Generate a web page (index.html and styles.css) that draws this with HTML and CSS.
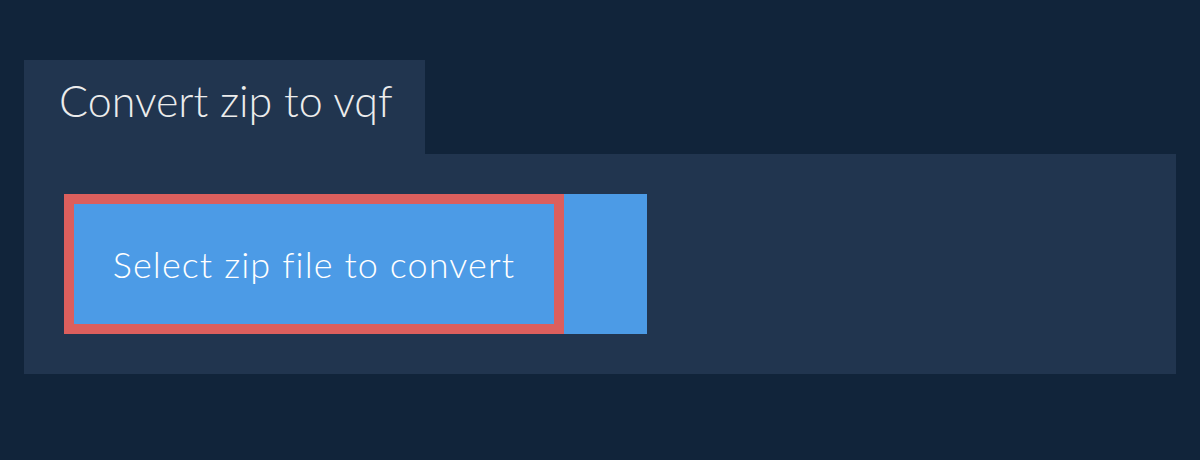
FILE: index.html
```html
<!DOCTYPE html>
<html lang="en">
<head>
    <meta charset="UTF-8">
    <meta name="viewport" content="width=device-width, initial-scale=1.0">
    <title>Convert zip to vqf</title>
    <link rel="stylesheet" href="styles.css">
</head>
<body>
    <div class="wrap">
        <!-- Tab title -->
        <div class="tab">
            <h1>Convert zip to vqf</h1>
        </div>

        <!-- Upload panel -->
        <div class="panel">
            <div class="picker">
                <label class="select">Select zip file to convert</label>
            </div>
        </div>
    </div>
</body>
</html>
```

FILE: styles.css
```css
/* General Styles */
body {
    margin: 0;
    padding: 0;
    background-color: #11243a;
    font-family: Lato, "Open Sans", sans-serif;
    color: #ececec;
}
.wrap {
    padding: 60px 24px 0;
}
.tab {
    display: inline-block;
    width: 401px;
    height: 94px;
    box-sizing: border-box;
    padding: 0 0 0 35px;
    background: #21354f;
}
.tab h1 {
    margin: 0;
    font-size: 43px;
    font-weight: 300;
    line-height: 82px;
}
.panel {
    display: flex;
    height: 220px;
    box-sizing: border-box;
    padding: 40px;
    background: #21354f;
}
.picker {
    display: flex;
    width: 583px;
    height: 140px;
    background: #4c9be6;
}
.select {
    display: flex;
    align-items: center;
    justify-content: center;
    width: 500px;
    height: 140px;
    box-sizing: border-box;
    border: 10px solid #dc5f5d;
    color: #fff;
    font-size: 36px;
    font-weight: 300;
    letter-spacing: 1.1px;
    cursor: pointer;
}
```
